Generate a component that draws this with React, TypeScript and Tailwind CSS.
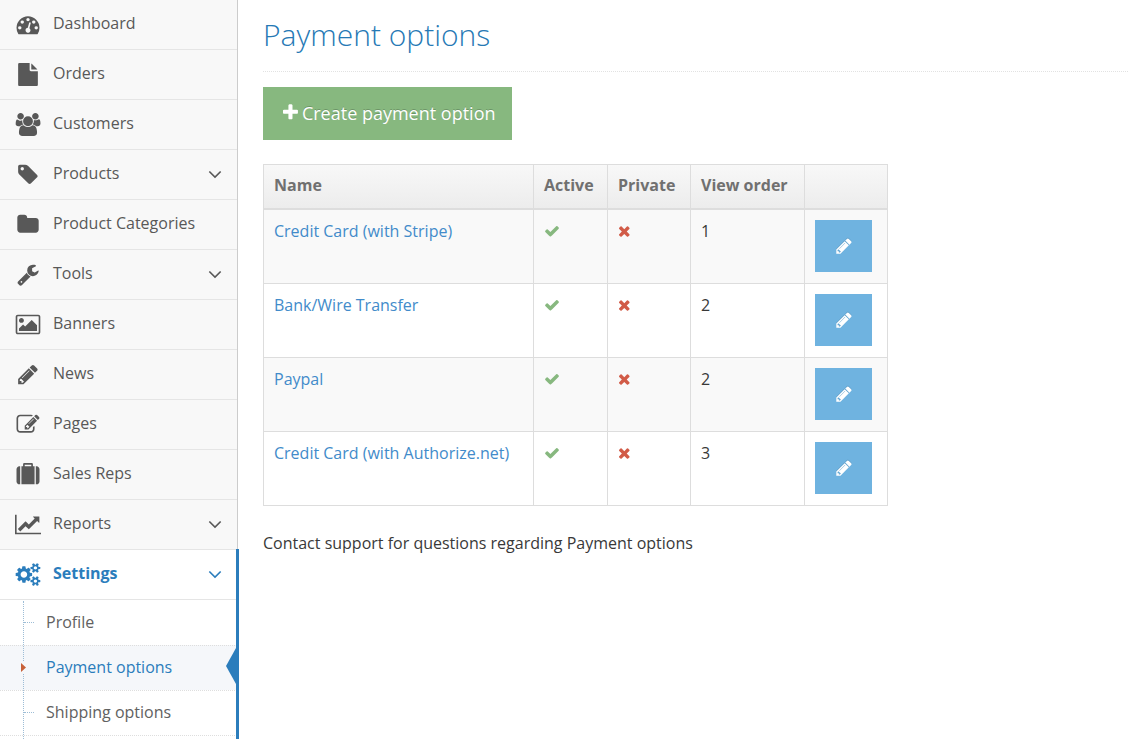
import type { ReactNode } from "react";
import { clsx } from "clsx";

type IconDef = { box: string; d: string };

const ICONS = {
  dashboard: {
    box: "0 0 1792 1792",
    d: "M384 1152q0-53-37.5-90.5t-90.5-37.5-90.5 37.5-37.5 90.5 37.5 90.5 90.5 37.5 90.5-37.5 37.5-90.5zm192-448q0-53-37.5-90.5t-90.5-37.5-90.5 37.5-37.5 90.5 37.5 90.5 90.5 37.5 90.5-37.5 37.5-90.5zm428 481l101-382q6-26-7.5-48.5t-38.5-29.5-48 6.5-30 39.5l-101 382q-60 5-107 43.5t-63 98.5q-20 77 20 146t117 89 146-20 89-117q16-60-6-117t-72-91zm660-33q0-53-37.5-90.5t-90.5-37.5-90.5 37.5-37.5 90.5 37.5 90.5 90.5 37.5 90.5-37.5 37.5-90.5zm-640-640q0-53-37.5-90.5t-90.5-37.5-90.5 37.5-37.5 90.5 37.5 90.5 90.5 37.5 90.5-37.5 37.5-90.5zm448 192q0-53-37.5-90.5t-90.5-37.5-90.5 37.5-37.5 90.5 37.5 90.5 90.5 37.5 90.5-37.5 37.5-90.5zm320 448q0 261-141 483-19 29-54 29h-1402q-35 0-54-29-141-221-141-483 0-182 71-348t191-286 286-191 348-71 348 71 286 191 191 286 71 348z",
  },
  file: {
    box: "0 0 1792 1792",
    d: "M1152 512v-472q22 14 36 28l408 408q14 14 28 36h-472zm-128 32q0 40 28 68t68 28h544v1056q0 40-28 68t-68 28h-1344q-40 0-68-28t-28-68v-1600q0-40 28-68t68-28h800v544z",
  },
  users: {
    box: "0 0 1920 1792",
    d: "M593 896q-162 5-265 128h-134q-82 0-138-40.5t-56-118.5q0-353 124-353 6 0 43.5 21t97.5 42.5 119 21.5q67 0 133-23-5 37-5 66 0 159 93 287zm1071 637q0 120-73 189.5t-194 69.5h-874q-121 0-194-69.5t-73-189.5q0-53 3.5-103.5t14-109 26.5-108.5 43-97.5 62-81 85.5-53.5 111.5-20q10 0 43 21.5t73 48 107 48 135 21.5 135-21.5 107-48 73-48 43-21.5q61 0 111.5 20t85.5 53.5 62 81 43 97.5 26.5 108.5 14 109 3.5 103.5zm-1024-1277q0 106-75 181t-181 75-181-75-75-181 75-181 181-75 181 75 75 181zm704 384q0 159-112.5 271.5t-271.5 112.5-271.5-112.5-112.5-271.5 112.5-271.5 271.5-112.5 271.5 112.5 112.5 271.5zm576 225q0 78-56 118.5t-138 40.5h-134q-103-123-265-128 93-128 93-287 0-29-5-66 66 23 133 23 59 0 119-21.5t97.5-42.5 43.5-21q124 0 124 353zm-128-609q0 106-75 181t-181 75-181-75-75-181 75-181 181-75 181 75 75 181z",
  },
  tag: {
    box: "0 0 1792 1792",
    d: "M576 448q0-53-37.5-90.5t-90.5-37.5-90.5 37.5-37.5 90.5 37.5 90.5 90.5 37.5 90.5-37.5 37.5-90.5zm1067 576q0 53-37 90l-491 492q-39 37-91 37-53 0-90-37l-715-716q-38-37-64.5-101t-26.5-117v-416q0-52 38-90t90-38h416q53 0 117 26.5t102 64.5l715 714q37 39 37 91z",
  },
  folder: {
    box: "0 0 1792 1792",
    d: "M1728 608v704q0 92-66 158t-158 66h-1216q-92 0-158-66t-66-158v-960q0-92 66-158t158-66h320q92 0 158 66t66 158v32h672q92 0 158 66t66 158z",
  },
  wrench: {
    box: "0 0 1792 1792",
    d: "M448 1472q0-26-19-45t-45-19-45 19-19 45 19 45 45 19 45-19 19-45zm644-420l-682 682q-37 37-90 37-52 0-91-37l-106-108q-38-36-38-90 0-53 38-91l681-681q39 98 114.5 173.5t173.5 114.5zm634-435q0 39-23 106-47 134-164.5 217.5t-258.5 83.5q-185 0-316.5-131.5t-131.5-316.5 131.5-316.5 316.5-131.5q58 0 121.5 16.5t107.5 46.5q16 11 16 28t-16 28l-293 169v224l193 107q5-3 79-48.5t135.5-81 70.5-35.5q15 0 23.5 10t8.5 25z",
  },
  image: {
    box: "-64 0 1920 1792",
    d: "M576 576q0 80-56 136t-136 56-136-56-56-136 56-136 136-56 136 56 56 136zm1024 384v448h-1408v-192l320-320 160 160 512-512zm96-704h-1600q-13 0-22.5 9.5t-9.5 22.5v1216q0 13 9.5 22.5t22.5 9.5h1600q13 0 22.5-9.5t9.5-22.5v-1216q0-13-9.5-22.5t-22.5-9.5zm160 32v1216q0 66-47 113t-113 47h-1600q-66 0-113-47t-47-113v-1216q0-66 47-113t113-47h1600q66 0 113 47t47 113z",
  },
  pencil: {
    box: "0 0 1792 1792",
    d: "M491 1536l91-91-235-235-91 91v107h128v128h107zm523-928q0-22-22-22-10 0-17 7l-542 542q-7 7-7 17 0 22 22 22 10 0 17-7l542-542q7-7 7-17zm-54-192l416 416-832 832h-416v-416zm683 96q0 53-37 90l-166 166-416-416 166-165q36-38 90-38 53 0 91 38l235 234q37 39 37 91z",
  },
  edit: {
    box: "0 0 1792 1792",
    d: "M888 1184l116-116-152-152-116 116v56h96v96h56zm440-720q-16-16-33 1l-350 350q-17 17-1 33t33-1l350-350q17-17 1-33zm80 594v190q0 119-84.5 203.5t-203.5 84.5h-832q-119 0-203.5-84.5t-84.5-203.5v-832q0-119 84.5-203.5t203.5-84.5h832q63 0 117 25 15 7 18 23 3 17-9 29l-49 49q-14 14-32 8-23-6-45-6h-832q-66 0-113 47t-47 113v832q0 66 47 113t113 47h832q66 0 113-47t47-113v-126q0-13 9-22l64-64q15-15 35-7t20 29zm-96-738l288 288-672 672h-288v-288zm444 132l-92 92-288-288 92-92q28-28 68-28t68 28l152 152q28 28 28 68t-28 68z",
  },
  suitcase: {
    box: "0 0 1792 1792",
    d: "M640 256h512v-128h-512v128zm-352 0v1408h-64q-92 0-158-66t-66-158v-960q0-92 66-158t158-66h64zm1120 0v1408h-1024v-1408h128v-160q0-40 28-68t68-28h576q40 0 68 28t28 68v160h128zm384 224v960q0 92-66 158t-158 66h-64v-1408h64q92 0 158 66t66 158z",
  },
  chart: {
    box: "0 0 2048 1792",
    d: "M2048 1536v128h-2048v-1536h128v1408h1920zm-128-1248v435q0 21-19.5 29.5t-35.5-7.5l-121-121-633 633q-10 10-23 10t-23-10l-233-233-416 416-192-192 585-585q10-10 23-10t23 10l233 233 464-464-121-121q-16-16-7.5-35.5t29.5-19.5h435q14 0 23 9t9 23z",
  },
  cogs: {
    box: "0 0 1920 1792",
    d: "M896 896q0-106-75-181t-181-75-181 75-75 181 75 181 181 75 181-75 75-181zm768 512q0-52-38-90t-90-38-90 38-38 90q0 53 37.5 90.5t90.5 37.5 90.5-37.5 37.5-90.5zm0-1024q0-52-38-90t-90-38-90 38-38 90q0 53 37.5 90.5t90.5 37.5 90.5-37.5 37.5-90.5zm-384 421v185q0 10-7 19.5t-16 10.5l-155 24q-11 35-32 76 34 48 90 115 7 11 7 20 0 12-7 19-23 30-82.5 89.5t-78.5 59.5q-11 0-21-7l-115-90q-37 19-77 31-11 108-23 155-7 24-30 24h-186q-11 0-20-7.5t-10-17.5l-23-153q-34-10-75-31l-118 89q-7 7-20 7-11 0-21-8-144-133-144-160 0-9 7-19 10-14 41-53t47-61q-23-44-35-82l-152-24q-10-1-17-9.5t-7-19.5v-185q0-10 7-19.5t16-10.5l155-24q11-35 32-76-34-48-90-115-7-11-7-20 0-12 7-20 22-30 82-89t79-59q11 0 21 7l115 90q34-18 77-32 11-108 23-154 7-24 30-24h186q11 0 20 7.5t10 17.5l23 153q34 10 75 31l118-89q8-7 20-7 11 0 21 8 144 133 144 160 0 8-7 19-12 16-42 54t-45 60q23 48 34 82l152 23q10 2 17 10.5t7 19.5zm640 533v140q0 16-149 31-12 27-30 52 51 113 51 138 0 4-4 7-122 71-124 71-8 0-46-47t-52-68q-20 2-30 2t-30-2q-14 21-52 68t-46 47q-2 0-124-71-4-3-4-7 0-25 51-138-18-25-30-52-149-15-149-31v-140q0-16 149-31 13-29 30-52-51-113-51-138 0-4 4-7 4-2 35-20t59-34 30-16q8 0 46 46.5t52 67.5q20-2 30-2t30 2q51-71 92-112l6-2q4 0 124 70 4 3 4 7 0 25-51 138 17 23 30 52 149 15 149 31zm0-1024v140q0 16-149 31-12 27-30 52 51 113 51 138 0 4-4 7-122 71-124 71-8 0-46-47t-52-68q-20 2-30 2t-30-2q-14 21-52 68t-46 47q-2 0-124-71-4-3-4-7 0-25 51-138-18-25-30-52-149-15-149-31v-140q0-16 149-31 13-29 30-52-51-113-51-138 0-4 4-7 4-2 35-20t59-34 30-16q8 0 46 46.5t52 67.5q20-2 30-2t30 2q51-71 92-112l6-2q4 0 124 70 4 3 4 7 0 25-51 138 17 23 30 52 149 15 149 31z",
  },
  angleDown: {
    box: "0 0 1792 1792",
    d: "M1395 736q0 13-10 23l-466 466q-10 10-23 10t-23-10l-466-466q-10-10-10-23t10-23l50-50q10-10 23-10t23 10l393 393 393-393q10-10 23-10t23 10l50 50q10 10 10 23z",
  },
  check: {
    box: "0 0 1792 1792",
    d: "M1671 566q0 40-28 68l-724 724-136 136q-28 28-68 28t-68-28l-136-136-362-362q-28-28-28-68t28-68l136-136q28-28 68-28t68 28l294 295 656-657q28-28 68-28t68 28l136 136q28 28 28 68z",
  },
  times: {
    box: "192 0 1408 1792",
    d: "M1490 1322q0 40-28 68l-136 136q-28 28-68 28t-68-28l-294-294-294 294q-28 28-68 28t-68-28l-136-136q-28-28-28-68t28-68l294-294-294-294q-28-28-28-68t28-68l136-136q28-28 68-28t68 28l294 294 294-294q28-28 68-28t68 28l136 136q28 28 28 68t-28 68l-294 294 294 294q28 28 28 68z",
  },
  plus: {
    box: "192 0 1408 1792",
    d: "M1600 736v192q0 40-28 68t-68 28h-416v416q0 40-28 68t-68 28h-192q-40 0-68-28t-28-68v-416h-416q-40 0-68-28t-28-68v-192q0-40 28-68t68-28h416v-416q0-40 28-68t68-28h192q40 0 68 28t28 68v416h416q40 0 68 28t28 68z",
  },
} satisfies Record<string, IconDef>;

type IconName = keyof typeof ICONS;

const NAV: { label: string; icon: IconName; expandable?: boolean }[] = [
  { label: "Dashboard", icon: "dashboard" },
  { label: "Orders", icon: "file" },
  { label: "Customers", icon: "users" },
  { label: "Products", icon: "tag", expandable: true },
  { label: "Product Categories", icon: "folder" },
  { label: "Tools", icon: "wrench", expandable: true },
  { label: "Banners", icon: "image" },
  { label: "News", icon: "pencil" },
  { label: "Pages", icon: "edit" },
  { label: "Sales Reps", icon: "suitcase" },
  { label: "Reports", icon: "chart", expandable: true },
];

const SETTINGS = ["Profile", "Payment options", "Shipping options"];
const CURRENT = "Payment options";

const OPTIONS = [
  { name: "Credit Card (with Stripe)", order: 1 },
  { name: "Bank/Wire Transfer", order: 2 },
  { name: "Paypal", order: 2 },
  { name: "Credit Card (with Authorize.net)", order: 3 },
];

function Icon({ name, label, className }: { name: IconName; label?: string; className?: string }) {
  const icon = ICONS[name];
  return (
    <svg
      viewBox={icon.box}
      fill="currentColor"
      className={clsx("shrink-0", className)}
      role={label ? "img" : undefined}
      aria-label={label}
      aria-hidden={label ? undefined : true}
    >
      <path d={icon.d} />
    </svg>
  );
}

function NavLink({
  label,
  icon,
  expandable,
  active,
}: {
  label: string;
  icon: IconName;
  expandable?: boolean;
  active?: boolean;
}) {
  return (
    <a
      href="#"
      className={clsx(
        "flex h-[50px] items-center border-b border-[#e5e5e5] pr-[11px] pl-[15px]",
        active ? "bg-white font-bold text-[#2b7dbc]" : "bg-[#f8f8f8] text-[#585858]",
      )}
    >
      <Icon name={icon} className="h-[23px] w-[26px]" />
      <span className="grow pb-1 pl-3">{label}</span>
      {expandable && <Icon name="angleDown" className="mb-0.5 size-[22px]" />}
    </a>
  );
}

function SubLink({ label, current }: { label: string; current: boolean }) {
  return (
    <li className="group relative">
      <a
        href="#"
        aria-current={current ? "page" : undefined}
        className={clsx(
          "flex h-[45px] items-center border-t border-dotted border-[#dedede] pb-0.5 pl-[46px] group-first:border-transparent",
          current ? "bg-[#f5f7fa] text-[#2b7dbc]" : "bg-white text-[#616161]",
        )}
      >
        {label}
      </a>
      {current ? (
        <>
          <span className="absolute top-4 left-5 z-10 flex h-3 w-2 items-center bg-[#f5f7fa]" aria-hidden>
            <svg viewBox="0 0 5 9" className="ml-px h-[9px] w-[5px]" fill="#c86139">
              <path d="M0 0l5 4.500-5 4.500z" />
            </svg>
          </span>
          <svg viewBox="0 0 10 36" className="absolute top-[3px] right-px h-9 w-2.5" fill="#2b7dbc" aria-hidden>
            <path d="M10 0v36L0 18z" />
          </svg>
        </>
      ) : (
        <span
          className="absolute top-[22px] left-6 w-2.5 border-t border-dotted border-[#9dbdd6]"
          aria-hidden
        />
      )}
    </li>
  );
}

function Th({ className, children }: { className: string; children?: ReactNode }) {
  return (
    <th
      scope="col"
      className={clsx("border border-b-2 border-[#ddd] px-2.5 pt-2 pb-2.5 text-left font-bold", className)}
    >
      {children}
    </th>
  );
}

export default function App() {
  return (
    <div className="flex h-screen overflow-hidden bg-white font-['Open_Sans',sans-serif] text-base text-[#393939]">
      <nav
        className="flex w-[238px] shrink-0 flex-col border-r border-[#ccc] bg-[#f8f8f8]"
        aria-label="Main menu"
      >
        <ul>
          {NAV.map((item) => (
            <li key={item.label}>
              <NavLink {...item} />
            </li>
          ))}
        </ul>
        <div className="relative flex grow flex-col bg-white">
          <NavLink label="Settings" icon="cogs" expandable active />
          <div className="relative grow">
            <ul className="border-b border-dotted border-[#dedede]">
              {SETTINGS.map((label) => (
                <SubLink key={label} label={label} current={label === CURRENT} />
              ))}
            </ul>
            <span
              className="absolute top-px bottom-0 left-[23px] border-l border-dotted border-[#9dbdd6]"
              aria-hidden
            />
          </div>
          <span className="absolute -top-px -right-0.5 bottom-0 w-[3px] bg-[#2b7dbc]" aria-hidden />
        </div>
      </nav>

      <main className="min-w-0 grow pt-[15px] pl-[25px]">
        <h1 className="border-b border-dotted border-[#e2e2e2] pb-4 text-3xl leading-10 font-light text-[#2679b5]">
          Payment options
        </h1>

        <button
          type="button"
          className="mt-[15px] flex h-[53px] w-[249px] items-center bg-[#87b87f] pb-0.5 pl-5 text-lg whitespace-nowrap text-white text-shadow-[0_-1px_0_rgba(0,0,0,0.2)]"
        >
          <Icon name="plus" className="mr-1 h-[19px]" />
          Create payment option
        </button>

        <table className="mt-6 w-[625px] table-fixed border-collapse">
          <thead>
            <tr className="h-11 bg-linear-to-b from-[#f8f8f8] to-[#ececec] text-[#707070]">
              <Th className="w-[270px]">Name</Th>
              <Th className="w-[74px]">Active</Th>
              <Th className="w-[83px]">Private</Th>
              <Th className="w-[114px]">View order</Th>
              <Th className="w-[83px]" />
            </tr>
          </thead>
          <tbody>
            {OPTIONS.map((option) => (
              <tr key={option.name} className="h-[74px] align-top first:h-[75px] odd:bg-[#f9f9f9]">
                <td className="border border-[#ddd] px-2.5 py-[9px]">
                  <a href="#" className="text-[#428bca]">
                    {option.name}
                  </a>
                </td>
                <td className="border border-[#ddd] px-2.5 py-[13px]">
                  <Icon name="check" label="Yes" className="size-4 text-[#87b87f]" />
                </td>
                <td className="border border-[#ddd] px-2.5 py-[13px]">
                  <Icon name="times" label="No" className="h-4 text-[#d15b47]" />
                </td>
                <td className="border border-[#ddd] px-2.5 py-[9px]">{option.order}</td>
                <td className="border border-[#ddd] p-2.5">
                  <button
                    type="button"
                    aria-label={`Edit ${option.name}`}
                    className="flex h-[52px] w-[57px] items-center justify-center bg-[#6fb3e0] text-white"
                  >
                    <Icon name="pencil" className="size-[18px] drop-shadow-[0_-1px_0_rgba(0,0,0,0.1)]" />
                  </button>
                </td>
              </tr>
            ))}
          </tbody>
        </table>

        <p className="mt-[25px] leading-6">Contact support for questions regarding Payment options</p>
      </main>
    </div>
  );
}
